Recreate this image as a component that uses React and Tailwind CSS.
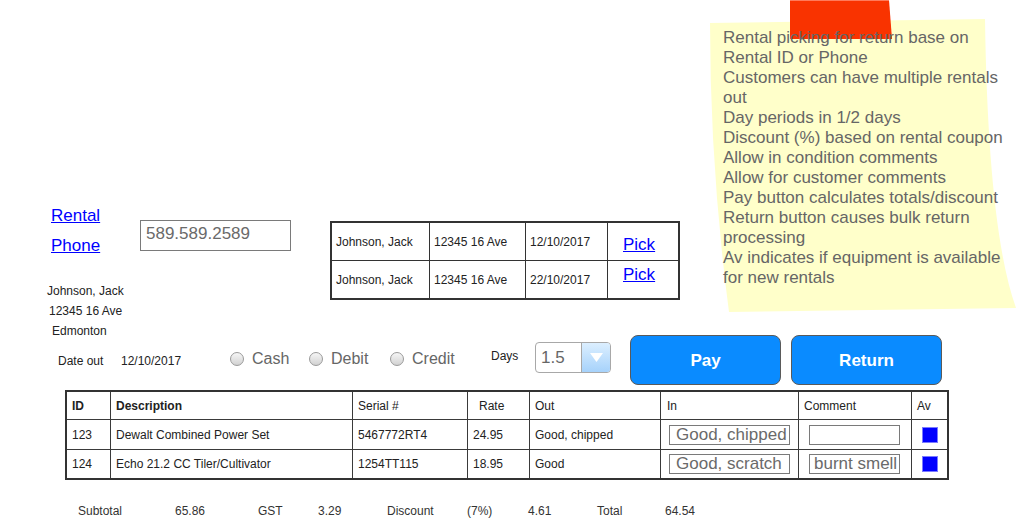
import React from 'react';

const font = "font-['Liberation_Sans',Arial,sans-serif]";

const notes = [
    'Rental picking for return base on',
    'Rental ID or Phone',
    'Customers can have multiple rentals',
    'out',
    'Day periods in 1/2 days',
    'Discount (%) based on rental coupon',
    'Allow in condition comments',
    'Allow for customer comments',
    'Pay button calculates totals/discount',
    'Return button causes bulk return',
    'processing',
    'Av indicates if equipment is available',
    'for new rentals',
];

const picks = [
    { name: 'Johnson, Jack', addr: '12345 16 Ave', date: '12/10/2017', h: 'h-[38px] border-b', pt: 'pt-[12px]' },
    { name: 'Johnson, Jack', addr: '12345 16 Ave', date: '22/10/2017', h: 'h-[37px]', pt: 'pt-[4px]' },
];

const items = [
    { id: '123', desc: 'Dewalt Combined Power Set', serial: '5467772RT4', rate: '24.95', out: 'Good, chipped', inn: 'Good, chipped', comment: '', h: 'h-[30px] border-b' },
    { id: '124', desc: 'Echo 21.2 CC Tiler/Cultivator', serial: '1254TT115', rate: '18.95', out: 'Good', inn: 'Good, scratch', comment: 'burnt smell', h: 'h-[28px]' },
];

const cols = 'grid grid-cols-[44px_242px_115px_62px_131px_138px_113px_35px]';
const cell = 'flex items-center border-r border-[#3a3a3a] pl-[5px]';

const totals = [
    ['Subtotal', 'w-[97px]'],
    ['65.86', 'w-[83px]'],
    ['GST', 'w-[60px]'],
    ['3.29', 'w-[69px]'],
    ['Discount', 'w-[80px]'],
    ['(7%)', 'w-[61px]'],
    ['4.61', 'w-[69px]'],
    ['Total', 'w-[68px]'],
    ['64.54', 'w-[60px]'],
];

function Radio({ label, width }) {
    return (
        <div className={`flex h-[20px] items-center ${width}`}>
            <span className="size-[14px] rounded-full border border-[#9a9a9a] bg-linear-to-b from-[#f6f6f6] to-[#d2d2d2]" />
            <span className="ml-[8px] text-[16px] leading-[20px] text-[#666]">{label}</span>
        </div>
    );
}

function StickyNote() {
    return (
        <>
            <svg className="absolute left-[700px] top-0" width="321" height="321" viewBox="0 0 321 321">
                <path d="M10,23 L285,19 Q288,230 316,308 L29,312 Q10,167 10,23 Z" fill="#ffffca" />
                <path d="M90,0 L189,0 L192,39 L90,39 Z" fill="#f93300" />
                <path d="M90,0.5 L189,0.5" stroke="#ff7a5a" strokeWidth="1" />
            </svg>
            <div className="absolute left-[723px] top-[28px] text-[17px] leading-[20px] text-[#666]">
                {notes.map((n) => (
                    <div key={n}>{n}</div>
                ))}
            </div>
        </>
    );
}

export default function App() {
    return (
        <div className={`relative h-[521px] w-[1021px] overflow-hidden bg-white text-[#222] ${font}`}>
            {/* lookup row */}
            <div className="flex h-[335px] items-start pt-[201px]">
                <div className="ml-[47px] w-[93px]">
                    <a className="block h-[30px] pl-[4px] text-[17px] leading-[30px] text-[#0000ff] underline">Rental</a>
                    <a className="block h-[30px] pl-[4px] text-[17px] leading-[30px] text-[#0000ff] underline">Phone</a>
                    <div className="mt-[20px] text-[12px] leading-[20px] text-[#222]">
                        <div>Johnson, Jack</div>
                        <div className="pl-[2px]">12345 16 Ave</div>
                        <div className="pl-[5px]">Edmonton</div>
                    </div>
                </div>

                <div className="mt-[19px] h-[31px] w-[151px] border border-[#7a7a7a] pl-[5px] pt-[3px] text-[17px] leading-[19px] text-[#6a6a6a]">
                    589.589.2589
                </div>

                <div className="ml-[39px] mt-[20px] grid w-[350px] grid-cols-[98px_96px_82px_70px] border-2 border-[#333] text-[12px]">
                    {picks.map((p, i) => (
                        <React.Fragment key={i}>
                            <div className={`flex items-center border-r border-[#333] pl-[4px] ${p.h}`}>{p.name}</div>
                            <div className={`flex items-center border-r border-[#333] pl-[4px] ${p.h}`}>{p.addr}</div>
                            <div className={`flex items-center border-r border-[#333] pl-[4px] ${p.h}`}>{p.date}</div>
                            <div className={`border-[#333] pl-[15px] ${p.pt} ${p.h}`}>
                                <a className="text-[17px] leading-[19px] text-[#0000ff] underline">Pick</a>
                            </div>
                        </React.Fragment>
                    ))}
                </div>
            </div>

            {/* payment controls */}
            <div className="flex h-[50px] items-start text-[12px]">
                <div className="ml-[58px] mt-[16px] w-[63px] leading-[20px]">Date out</div>
                <div className="mt-[16px] w-[109px] leading-[20px]">12/10/2017</div>
                <div className="mt-[14px] flex">
                    <Radio label="Cash" width="w-[79px]" />
                    <Radio label="Debit" width="w-[81px]" />
                    <Radio label="Credit" width="w-[101px]" />
                </div>
                <div className="mt-[11px] w-[44px] leading-[20px]">Days</div>
                <div className="mt-[7px] flex h-[31px] w-[76px] overflow-hidden rounded-[4px] border border-[#a8a8a8] bg-white">
                    <div className="flex-1 pl-[5px] pt-[5px] text-[17px] leading-[19px] text-[#666]">1.5</div>
                    <div className="flex w-[29px] items-center justify-center border-l border-[#a8a8a8] bg-linear-to-b from-[#dcefff] to-[#a6d2fb]">
                        <svg width="13" height="9" viewBox="0 0 13 9">
                            <path d="M0,0 L13,0 L6.5,9 Z" fill="#fff" />
                        </svg>
                    </div>
                </div>
                <button className="ml-[19px] h-[50px] w-[151px] rounded-[8px] border border-[#5a5a5a] bg-[#0a8bff] pt-[2px] text-[17px] font-bold text-white">
                    Pay
                </button>
                <button className="ml-[10px] h-[50px] w-[151px] rounded-[8px] border border-[#5a5a5a] bg-[#0a8bff] pt-[2px] text-[17px] font-bold text-white">
                    Return
                </button>
            </div>

            {/* items table */}
            <div className="ml-[65px] mt-[5px] w-[884px] border-2 border-[#333] text-[12px]">
                <div className={`${cols} h-[28px] border-b border-[#3a3a3a]`}>
                    <div className={`${cell} pl-[3px] font-bold`}>ID</div>
                    <div className={`${cell} font-bold`}>Description</div>
                    <div className={cell}>Serial #</div>
                    <div className={`${cell} pl-[11px]`}>Rate</div>
                    <div className={cell}>Out</div>
                    <div className={`${cell} pl-[6px]`}>In</div>
                    <div className={cell}>Comment</div>
                    <div className="flex items-center pl-[5px]">Av</div>
                </div>
                {items.map((it) => (
                    <div key={it.id} className={`${cols} border-[#3a3a3a] ${it.h}`}>
                        <div className={`${cell} pl-[3px]`}>{it.id}</div>
                        <div className={cell}>{it.desc}</div>
                        <div className={cell}>{it.serial}</div>
                        <div className={cell}>{it.rate}</div>
                        <div className={cell}>{it.out}</div>
                        <div className={`${cell} pl-[8px]`}>
                            <div className="h-[20px] w-[121px] overflow-hidden whitespace-nowrap border border-[#7a7a7a] pl-[6px] text-[17px] leading-[18px] text-[#6a6a6a]">
                                {it.inn}
                            </div>
                        </div>
                        <div className={`${cell} pl-[10px]`}>
                            <div className="h-[20px] w-[91px] overflow-hidden whitespace-nowrap border border-[#7a7a7a] pl-[4px] text-[17px] leading-[18px] text-[#6a6a6a]">
                                {it.comment}
                            </div>
                        </div>
                        <div className="flex items-center justify-center">
                            <span className="size-[16px] border border-[#7b7bff] bg-[#0000ff]" />
                        </div>
                    </div>
                ))}
            </div>

            {/* totals */}
            <div className="mt-[21px] flex pl-[78px] text-[12px] leading-[20px] text-[#333]">
                {totals.map(([t, w]) => (
                    <div key={t} className={w}>{t}</div>
                ))}
            </div>

            <StickyNote />
        </div>
    );
}
